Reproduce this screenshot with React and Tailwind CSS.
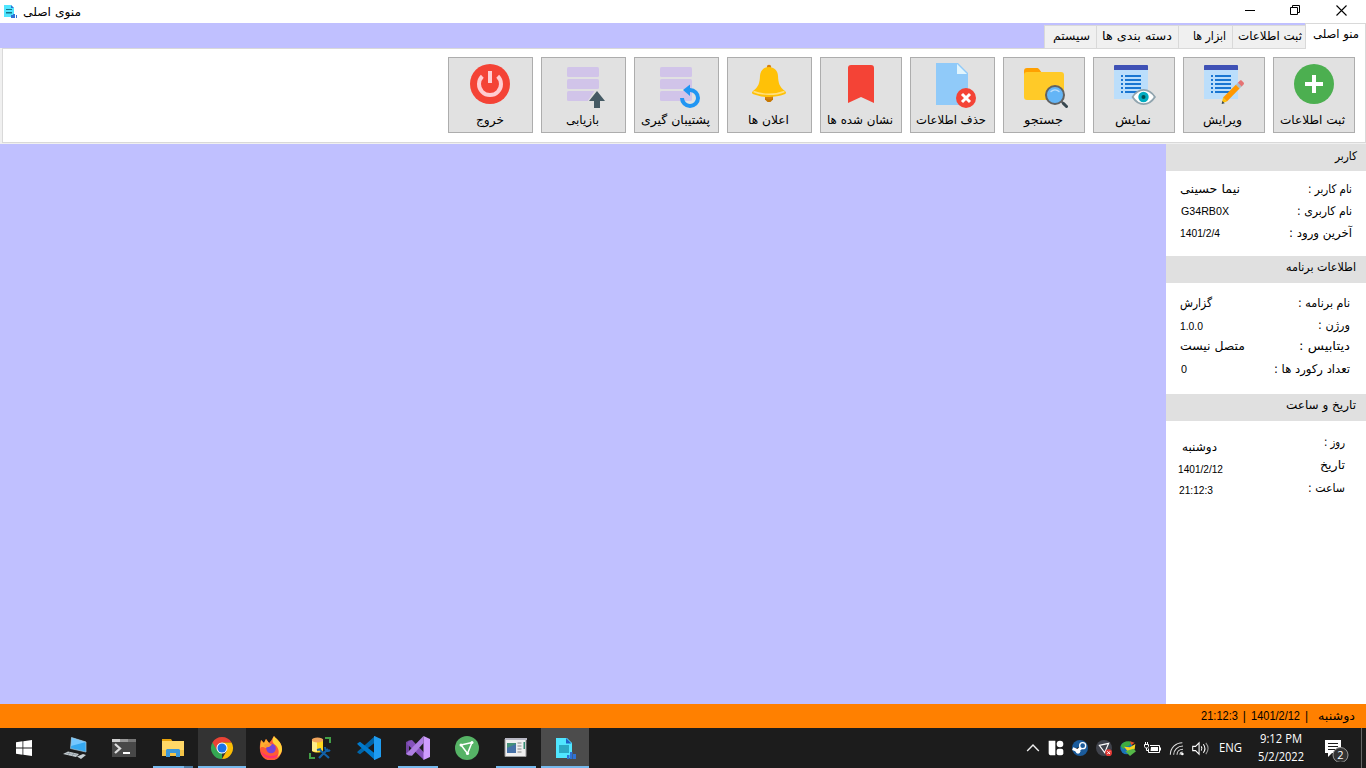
import { useLayoutEffect, useRef } from "react";

/* Text condensed or widened to a given width. */
function Fit({ w, children, className = "", dir = "rtl" }) {
  const ref = useRef(null);
  useLayoutEffect(() => {
    const el = ref.current;
    el.style.transform = "none";
    el.style.transform = `scaleX(${w / el.getBoundingClientRect().width})`;
  }, [w, children]);
  return (
    <span dir="ltr" className={"block shrink-0 " + className} style={{ width: w }}>
      <span ref={ref} dir={dir} className="inline-block origin-left whitespace-nowrap">
        {children}
      </span>
    </span>
  );
}

const Ico = ({ children }) => (
  <svg width="48" height="48" viewBox="0 0 48 48" className="block shrink-0">{children}</svg>
);

const Form = () => (
  <>
    <path fill="#BBDEFB" d="M4 5h34v34H4z" />
    <path fill="#3F51B5" d="M4 10V6a1 1 0 0 1 1-1h32a1 1 0 0 1 1 1v4z" />
    <path fill="#1976D2" d="M11 15h2v2h-2zM15 15h16v2H15zM11 19h2v2h-2zM15 19h16v2H15zM11 23h2v2h-2zM15 23h16v2H15zM11 27h2v2h-2zM15 27h16v2H15zM11 31h2v2h-2zM15 31h16v2H15z" />
  </>
);

const Disks = () => (
  <g fill="#D1C4E9">
    <rect x="8" y="7" width="32" height="10" rx="1.5" />
    <rect x="8" y="19" width="32" height="10" rx="1.5" />
    <rect x="8" y="31" width="32" height="10" rx="1.5" />
  </g>
);

const icons = {
  add: (
    <>
      <circle cx="24" cy="24" r="20" fill="#4CAF50" />
      <path fill="#fff" d="M22 15h4v7h7v4h-7v7h-4v-7h-7v-4h7z" />
    </>
  ),
  edit: (
    <>
      <Form />
      <path fill="#E57373" d="M43.6 24.6l-2.2 2.2-3.8-3.8 2.2-2.2c.6-.6 1.5-.6 2 0l1.8 1.8c.5.5.5 1.4 0 2z" />
      <path fill="#B0BEC5" d="M37.8 22.8l3.8 3.8-2 2-3.8-3.8z" />
      <path fill="#FF9800" d="M35.8 24.8l3.8 3.8-12.7 12.8-3.8-3.8z" />
      <path fill="#FFC107" d="M23.1 37.6L21.8 43.2l5.1-1.8z" />
      <path fill="#37474F" d="M22.3 40.9L21.7 44l3-.8z" />
    </>
  ),
  view: (
    <>
      <Form />
      <path fill="#fff" stroke="#90A4AE" strokeWidth="1.8" d="M22.6 37c2.8-4.5 6.6-7.1 11-7.1S42 32.500 44.900 37c-2.900 4.500-6.900 7.100-11.300 7.100S25.400 41.500 22.600 37z" />
      <circle cx="33.5" cy="37" r="5.2" fill="#00ACC1" />
      <circle cx="33.500" cy="37" r="2" fill="#004D50" />
    </>
  ),
  search: (
    <>
      <path fill="#FFA000" d="M4 22V11a3 3 0 0 1 3-3h9.500c1.200 0 2 .4 2.700 1.300L22 13z" />
      <path fill="#FFCA28" d="M7 12h34a3 3 0 0 1 3 3v22a3 3 0 0 1-3 3H7a3 3 0 0 1-3-3V15a3 3 0 0 1 3-3z" />
      <path stroke="#616161" strokeWidth="2.400" d="M41 41l4 4" />
      <path stroke="#37474F" strokeWidth="3" strokeLinecap="round" d="M43.500 43.500l3 3" />
      <circle cx="35" cy="35" r="9" fill="#64B5F6" stroke="#616161" strokeWidth="2" />
      <path fill="none" stroke="#BBDEFB" strokeWidth="1.400" strokeLinecap="round" d="M31 31.600c2.200-2.300 5.800-2.300 8 0" />
    </>
  ),
  remove: (
    <g transform="translate(1 0)">
      <path fill="#90CAF9" d="M7 3h22l10 10v32H7z" />
      <path fill="#E1F5FE" d="M28 4v10h10z" />
      <circle cx="37" cy="38" r="10" fill="#F44336" />
      <path stroke="#fff" strokeWidth="3" d="M33 34l8 8M41 34l-8 8" />
    </g>
  ),
  mark: <path fill="#F44336" d="M37 43l-13-6-13 6V8a3 3 0 0 1 3-3h20a3 3 0 0 1 3 3z" />,
  bell: (
    <>
      <circle cx="24" cy="7" r="2.200" fill="#D6800D" />
      <path fill="#C77700" d="M20 36h8v3.500L25.500 42h-3L20 39.500z" />
      <path fill="#FFC107" d="M24 7c-5 0-8.800 3.500-9 9-.3 7-1.500 11-7 15-1.500 1.500-1.300 2.700.5 3.300 9.500 3.700 21.500 3.700 31 0 1.800-.6 2-1.800.5-3.300-5.500-4-6.700-8-7-15-.2-5.500-4-9-9-9z" />
      <path fill="none" stroke="#FFE082" strokeWidth="1.600" d="M8.500 31.500c9 3.700 22 3.700 31 0" />
      <path fill="#D6800D" d="M20 37h8c-.5 1.700-2 2.500-4 2.500s-3.500-.8-4-2.500z" />
    </>
  ),
  backup: (
    <>
      <Disks />
      <path fill="none" stroke="#2196F3" strokeWidth="4" d="M37 30h1a8 8 0 1 1-8 8" />
      <path fill="#2196F3" d="M38 24.500v11.500l-7-6z" />
    </>
  ),
  restore: (
    <>
      <Disks />
      <path fill="#E1E1E1" d="M35.500 31h5v11H28z" />
      <path fill="#455A64" d="M38 31l8 10h-5v7h-6v-7h-5z" />
    </>
  ),
  power: (
    <>
      <circle cx="24" cy="24" r="20" fill="#F44336" />
      <path fill="none" stroke="#FFCDD2" strokeWidth="4" d="M16.300 16.200a11 11 0 1 0 15.400 0" />
      <path fill="#FFCDD2" d="M22 11h4v12h-4z" />
    </>
  ),
};

const buttons = [
  ["power", "خروج", 28, "w-[85px] pr-px", "mr-0"],
  ["restore", "بازیابی", 33, "w-[85px] pr-px", "mr-[2px]"],
  ["backup", "پشتیبان گیری", 69, "w-[85px] pr-px", "mr-[4px]"],
  ["bell", "اعلان ها", 41, "w-[85px] pr-px", "mr-[2px]"],
  ["mark", "نشان شده ها", 66, "w-[82px]", "mr-[2px]"],
  ["remove", "حذف اطلاعات", 70, "w-[85px] pr-px", "mr-[2px]"],
  ["search", "جستجو", 39, "w-[82px]", "mr-[4px]"],
  ["view", "نمایش", 36, "w-[82px]", "mr-[5px]"],
  ["edit", "ویرایش", 39, "w-[82px]", "mr-[4px]"],
  ["add", "ثبت اطلاعات", 65, "w-[82px]", "mr-[3px]"],
];

const tabs = [
  ["سیستم", 37, "w-[52px] pr-[6px]"],
  ["دسته بندی ها", 70, "w-[82px] pr-[6px]"],
  ["ابزار ها", 33, "w-[54px] pr-[6px]"],
  ["ثبت اطلاعات", 64, "w-[73px] pr-[3px]"],
];

function Head({ children, w, cls = "pr-[10px] pt-[2px]" }) {
  return (
    <div className={"flex h-[27px] justify-end bg-[#e0e0e0] leading-[18px] " + cls}>
      <Fit w={w}>{children}</Fit>
    </div>
  );
}

function Row({ label, lw, value, vw, latin, cls = "h-[22px]", down = "" }) {
  return (
    <div className={"flex justify-between " + cls}>
      <Fit w={vw} dir={latin ? "ltr" : "rtl"} className={(latin ? "font-['Liberation_Sans'] text-[11px] " : "") + down}>
        {value}
      </Fit>
      <Fit w={lw}>{label}</Fit>
    </div>
  );
}

const S = ({ children, size = 24 }) => (
  <svg width={size} height={size} viewBox="0 0 24 24" className="block shrink-0">{children}</svg>
);

const AppGlyph = () => (
  <S>
    <path fill="#50E6FF" d="M3 2h11l5 5v15H3z" />
    <path fill="#1D63C9" d="M13 2l5.500 5.500H13z" />
    <path fill="#2BA9C4" d="M6 9h10v8H6z" />
    <path fill="#2F72D6" d="M14 19h2.500v4H14zM17 16h2.500v7H17zM20 18h3v5h-3z" />
  </S>
);

const TitleGlyph = () => (
  <svg width="15" height="15" viewBox="0 0 15 15" className="block">
    <path fill="#50E6FF" d="M1 1h7l3 3v9H1z" />
    <path fill="#2F72D6" d="M8 1l3 3H8zM8 11h2v-1h2v4H8zM13 11h1v3h-1z" />
    <path fill="#17738A" d="M3 5h6v1H3zM3 8h6v1.500H3z" />
  </svg>
);

const taskIcons = [
  <S>
    <path fill="#35A8F0" d="M8.500 1.500L23 6v10L7.500 12.500z" />
    <path fill="#74C7FF" d="M8.500 1.500L23 6 8 10z" />
    <path fill="none" stroke="#A8C4D5" strokeWidth=".7" d="M8.500 1.500L23 6v10L7.500 12.500z" />
    <path fill="#C8D0D4" d="M5 15.500l11 2.500-3 3L0 18zM14 20.500l6-2.500 3 1-5 4z" />
    <path stroke="#77828A" strokeWidth=".6" d="M3 17l11 2M7 16l-2 3M11 17l-2 3" />
  </S>,
  <S>
    <path fill="#484848" d="M0 3h24v18H0z" />
    <path fill="#D0D0D0" d="M0 3h8v3H0z" />
    <path fill="#999" d="M8 3h8v3H8z" />
    <path fill="#777" d="M16 3h8v3h-8z" />
    <path fill="none" stroke="#ddd" strokeWidth="2.300" d="M3 8l5 4.500L3 17" />
    <path fill="#fff" d="M11 16h7v2h-7z" />
  </S>,
  <S>
    <path fill="#E7A20A" d="M1 3h9l2 3H1z" />
    <path fill="#FFD867" d="M1 5h22v15H1z" />
    <path fill="#F4C448" d="M1 14h22v6H1z" />
    <path fill="#3B97D9" d="M6 13h12l1 1v7h-4v-4H9v4H5v-7z" />
  </S>,
  <S>
    <path fill="#34A853" d="M12 12v11A11 11 0 0 1 2.470 6.500z" />
    <path fill="#EA4335" d="M12 6.500h9.530A11 11 0 0 0 2.470 6.500l4.800 8.200z" />
    <path fill="#FBBC05" d="M12 6.500h9.530A11 11 0 0 1 12 23l4.760-8.200z" />
    <circle cx="12" cy="12" r="5.500" fill="#fff" />
    <circle cx="12" cy="12" r="4.500" fill="#1A73E8" />
  </S>,
  <S>
    <path fill="#FF5A36" d="M2 4l3 3 2-4 3 4c2-2 3-4 5-7 2 3 8 6 8 13a11 11 0 1 1-22 1c-.5-4 .3-7 1-10z" />
    <path fill="#FF2E74" d="M1.500 15c5 6 12 6 19 3A11 11 0 0 1 1.500 15z" />
    <path fill="#FFD43A" d="M15 0c2 3 8 6 8 13 0 3-2 7-5 8 3-4 2-10-3-13-2-2-2-5 0-8z" />
    <path fill="#FFAE2E" d="M2 4l3 3 2-4 3 4c2 1 0 4-3 5-3-1-5-2-6 1z" />
    <circle cx="12" cy="12.500" r="4.800" fill="#7545DB" />
    <path fill="#FF9A31" d="M5 9c2-2 5-2 8-.5l-3 2.500c-2 0-3 1-4 0z" />
  </S>,
  <S>
    <path fill="none" stroke="#43A047" strokeWidth="2" d="M17 2h5v5M2 17v5h5" />
    <path fill="#FFD51E" d="M4 4h11v11c-3 2-8 2-11 0z" />
    <path fill="#FFEF89" d="M4 4h5v12l-5-1z" />
    <ellipse cx="9.500" cy="4" rx="5.700" ry="2.500" fill="#F2A55C" />
    <path stroke="#1261A8" strokeWidth="2.200" d="M11 22l9-9M12 14l9 8" />
    <path fill="none" stroke="#1261A8" strokeWidth="2" d="M9 14l4-1M17 11c0 4 3 5 5 3" />
  </S>,
  <S>
    <path fill="#0065A9" d="M18 0v6.500L3 18.300 1 17a1 1 0 0 1-.4-1.500z" />
    <path fill="#007ACC" d="M1 7l2-1.300L18 17.500V24L.6 8.500A1 1 0 0 1 1 7z" />
    <path fill="#1F9CF0" d="M17.500 0L24 3v18l-6.500 3c-.6 0-.5-.5-.5-1V1c0-.5 0-1 .5-1z" />
  </S>,
  <S>
    <path fill="#7345A4" d="M0 6l3-1.500v15L0 18z" />
    <path fill="#8652BC" d="M3 4.500l3-.5 12 12.500V24L1 8z" />
    <path fill="#AE7FE2" d="M17.500 0v7L6 19.800l-3-.3L0 18z" />
    <path fill="#CF9CFF" d="M17.500 0L24 3v18l-6.500 3z" />
  </S>,
  <S>
    <circle cx="12" cy="12" r="12" fill="#56B366" />
    <path fill="none" stroke="#fff" strokeWidth="1.500" strokeLinejoin="round" d="M6 9l11-2.500-4.500 11z" />
    <circle cx="6" cy="9" r="1.500" fill="#fff" />
    <circle cx="17" cy="6.500" r="1.500" fill="#fff" />
    <circle cx="12.500" cy="17.500" r="1.600" fill="#fff" />
  </S>,
  <S>
    <path fill="#EFEFEF" stroke="#999" d="M1 3h21v17.500H1z" />
    <path fill="#B8B8C4" d="M1 2h22v2H1z" />
    <path fill="#45927A" d="M3 7h9v10H3z" />
    <path fill="#4772A8" d="M3 12l9-4v9H3z" />
    <path stroke="#aaa" strokeWidth="1.500" d="M13.500 7h4M13.500 10h4M13.500 13h4M13.500 16h4" />
    <path fill="#348C73" d="M19.500 6h1.500v7h-1.500z" />
  </S>,
  <AppGlyph />,
];

const trayIcons = [
  <S size={14}>
    <path fill="none" stroke="#eee" strokeWidth="2.400" d="M2 17L12 7l10 10" />
  </S>,
  <S size={16}>
    <path fill="#fff" d="M1 1h10v22H5a4 4 0 0 1-4-4z" />
    <circle cx="18" cy="6" r="5" fill="#fff" />
    <rect x="13" y="13" width="10" height="10" rx="3" fill="#fff" />
  </S>,
  <S size={16}>
    <circle cx="12" cy="12" r="12" fill="#1B5B9B" />
    <path stroke="#fff" strokeWidth="4.500" d="M1 13l8 3 6-6" />
    <circle cx="16" cy="8.500" r="4.500" fill="#1B5B9B" stroke="#fff" strokeWidth="2" />
    <circle cx="9" cy="17" r="3.500" fill="#fff" />
  </S>,
  <S size={16}>
    <circle cx="12" cy="12" r="12" fill="#40434C" />
    <path fill="none" stroke="#fff" strokeWidth="1.700" d="M5 8l14-3-6 14z" />
    <circle cx="19" cy="19" r="5" fill="#E53935" />
    <path stroke="#fff" strokeWidth="1.500" d="M17 17l4 4M21 17l-4 4" />
  </S>,
  <S size={16}>
    <circle cx="10" cy="12" r="9.500" fill="#1A72B8" />
    <path fill="#3EAC3F" d="M1 9C4 2 13 0 18 4l-5 5-5 1-3 4z" />
    <path fill="#F7D320" d="M6 10l9 1 8-5-1 8-8 6z" />
    <path fill="#55B848" d="M8 17l12-4 4 4-9 7z" />
    <path fill="#E54E2B" d="M15 2l7 2-5 4z" />
  </S>,
  <svg width="17" height="16" viewBox="0 0 17 16" className="block">
    <path fill="none" stroke="#fff" d="M6 5.500h9.500v7h-11v-4" />
    <path fill="#fff" d="M7 7h7v4H6.500zM16 7.500h1v3h-1z" />
    <path fill="none" stroke="#fff" d="M.5 4.500h4v2c0 2-4 2-4 0zM1.500 4V2M3.500 4V2M2.500 8v2.500h2" />
  </svg>,
  <S size={16}>
    <g fill="none" stroke="#ddd" strokeWidth="1.600" transform="translate(0 2)">
      <path d="M2 20C2 10 10 2 20 2" />
      <path d="M7 20c0-7 6-13 14-13" />
      <path d="M12 20c0-5 4-8 9-8" />
      <path d="M16.500 20c0-3 2-4 4-4" />
    </g>
    <circle cx="20" cy="21" r="2" fill="#fff" />
  </S>,
  <S size={17}>
    <path fill="none" stroke="#fff" strokeWidth="1.500" d="M1 9h4l5-5v16l-5-5H1z" />
    <path fill="none" stroke="#fff" strokeWidth="1.500" d="M13 9c1.500 2 1.500 4 0 6M16 6c3 4 3 8 0 12" />
    <path fill="none" stroke="#999" strokeWidth="1.500" d="M19.500 4c4 5 4 11 0 16" />
  </S>,
];

const taskState = {
  3: "bg-[#333333]",
  10: "bg-[#4c4c4c]",
};

export default function App() {
  return (
    <div className="flex h-[768px] w-[1366px] flex-col overflow-hidden bg-white font-['DejaVu_Sans',sans-serif] text-[12px] leading-[18px] text-black">
      <header className="flex h-[23px] shrink-0 items-start">
        <div className="ml-[3px] mt-[4px]"><TitleGlyph /></div>
        <Fit w={58} className="ml-[5px] mt-[3px]">منوی اصلی</Fit>
        <div className="ml-auto mr-[17px] mt-[3px] flex gap-[31px]">
          <svg width="15" height="15"><path stroke="#000" d="M3 7.500h10" /></svg>
          <svg width="15" height="15"><path fill="none" stroke="#000" d="M2.500 4.500h7v7h-7zM4.500 4.500v-2h7v7h-2" /></svg>
          <svg width="15" height="15"><path stroke="#000" strokeWidth="1.100" d="M2.500 2.500l10 10M12.500 2.500l-10 10" /></svg>
        </div>
      </header>

      <nav className="flex h-[25px] shrink-0 justify-end bg-[#c0c0ff]">
        <div className="mt-[2px] flex h-[23px]">
          {tabs.map(([t, w, c]) => (
            <div key={t} className={"flex h-full justify-end border-l border-t border-[#d9d9d9] bg-[#f0f0f0] pt-px " + c}>
              <Fit w={w}>{t}</Fit>
            </div>
          ))}
        </div>
        <div className="z-10 flex h-[26px] w-[61px] justify-end border-x border-t border-[#d9d9d9] bg-white pr-[6px] pt-px">
          <Fit w={46}>منو اصلی</Fit>
        </div>
      </nav>

      <section className="flex h-[96px] shrink-0 border-b border-[#f0f0f0] bg-[#f0f0f0] pl-[2px]">
        <div className="flex flex-1 items-start justify-end gap-2 border border-[#d9d9d9] bg-white pr-[10px] pt-[8px]">
          {buttons.map(([icon, label, w, c, shift]) => (
            <button key={icon} className={"flex h-[76px] flex-col items-center border border-[#adadad] bg-[#e1e1e1] pt-[2px] " + c}>
              <Ico>{icons[icon]}</Ico>
              <Fit w={w} className={"mt-[3px] " + shift}>{label}</Fit>
            </button>
          ))}
        </div>
      </section>

      <main className="flex h-[560px] shrink-0">
        <div className="flex-1 bg-[#c0c0ff]" />
        <aside className="flex w-[200px] flex-col">
          <Head w={22} cls="pr-[9px] pt-[3px]">کاربر</Head>
          <div className="h-[85px] pl-[14px] pr-[14px] pt-[9px]">
            <Row label="نام کاربر :" lw={44} value="نیما حسینی" vw={60} />
            <Row label="نام کاربری :" lw={55} value="G34RB0X" vw={48} latin down="ml-px" />
            <Row label="آخرین ورود :" lw={63} value="1401/2/4" vw={40} latin />
          </div>
          <Head w={70}>اطلاعات برنامه</Head>
          <div className="h-[111px] pl-[14px] pr-[16px] pt-[11px]">
            <Row label="نام برنامه :" lw={52} value="گزارش" vw={32} />
            <Row label="ورژن :" lw={32} value="1.0.0" vw={23} latin down="mt-px" cls="h-[21px]" />
            <Row label="دیتابیس :" lw={51} value="متصل نیست" vw={65} cls="h-[23px]" />
            <Row label="تعداد رکورد ها :" lw={76} value="0" vw={6} latin down="ml-px" />
          </div>
          <Head w={70}>تاریخ و ساعت</Head>
          <div className="pl-[12px] pr-[21px] pt-[12px]">
            <Row label="روز :" lw={21} value="دوشنبه" vw={35} cls="h-[23px]" down="ml-[4px] mt-[5px]" />
            <Row label="تاریخ" lw={25} value="1401/2/12" vw={45} latin cls="h-[23px]" down="mt-[4px]" />
            <Row label="ساعت :" lw={37} value="21:12:3" vw={34} latin down="ml-px mt-[2px]" />
          </div>
        </aside>
      </main>

      <div className="flex h-[24px] shrink-0 justify-end bg-[#ff8000] pr-[11px] pt-[3px]">
        <div className="flex font-['Liberation_Sans'] text-[12px]">
          <Fit w={37} dir="ltr">21:12:3</Fit>
          <span className="ml-[5px]">|</span>
          <Fit w={49} dir="ltr" className="ml-[5px]">1401/2/12</Fit>
          <span className="ml-[5px]">|</span>
        </div>
        <Fit w={37} className="ml-[10px]">دوشنبه</Fit>
      </div>

      <footer className="flex h-[40px] shrink-0 bg-[#1c1c1c] font-['Open_Sans'] text-white">
        <div className="mr-[3px] flex w-[48px] items-center justify-center">
          <svg width="16" height="16" viewBox="0 0 16 16"><path fill="#fff" d="M0 2.200l6.500-.9v6.200H0zM7.300 1.200L16 0v7.500H7.300zM0 8.500h6.500v6.200L0 13.800zM7.300 8.500H16V16l-8.700-1.200z" /></svg>
        </div>
        <div className="flex gap-px">
          {taskIcons.map((icon, i) => (
            <div key={i} className={"flex h-[40px] w-[48px] flex-col items-center " + (taskState[i] || "")}>
              <div className="mt-[8px] h-[30px]">{icon}</div>
              {(i === 3 || i === 10) && <div className="h-[2px] w-[48px] bg-[#76b9ed]" />}
              {(i === 7 || i === 9) && <div className="h-[2px] w-[40px] bg-[#76b9ed]" />}
              {i === 2 && (
                <div className="flex h-[2px] w-[40px]">
                  <div className="w-[31px] bg-[#76b9ed]" />
                  <div className="flex-1 bg-[#4d7da5]" />
                </div>
              )}
            </div>
          ))}
        </div>
        <div className="ml-auto flex items-center">
          <div className="flex items-center gap-[8px]">
            {trayIcons.map((icon, i) => <div key={i} className={i < 7 ? "-mr-px ml-px" : ""}>{icon}</div>)}
          </div>
          <Fit w={23} dir="ltr" className="ml-[10px]">ENG</Fit>
          <div className="ml-[16px] flex w-[46px] flex-col items-center">
            <Fit w={42} dir="ltr">9:12 PM</Fit>
            <Fit w={46} dir="ltr">5/2/2022</Fit>
          </div>
          <svg width="26" height="28" viewBox="0 0 26 28" className="ml-[20px]">
            <path fill="#fff" d="M1 6h16v13H8l-4 4v-4H1z" />
            <path stroke="#1c1c1c" d="M4 9.500h10M4 12.500h10M4 15.500h10" />
            <circle cx="16.500" cy="21" r="7.500" fill="#333" stroke="#999" />
            <text x="16.500" y="25" textAnchor="middle" fontSize="11" fontFamily="Open Sans" fill="#fff">2</text>
          </svg>
          <div className="ml-[11px] mr-[4px] h-[40px] w-px bg-[#666]" />
        </div>
      </footer>
    </div>
  );
}
